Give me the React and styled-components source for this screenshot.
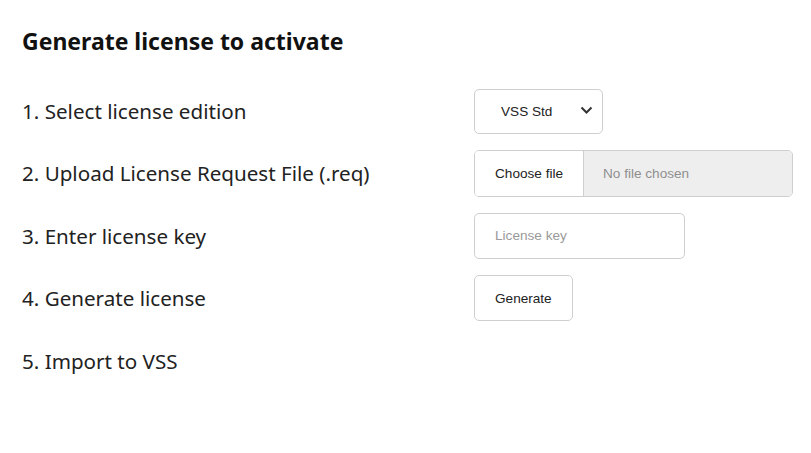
import React from "react";
import styled, { createGlobalStyle } from "styled-components";

const Global = createGlobalStyle`
  html, body { margin: 0; padding: 0; background: #fff; }
  body { font-family: "Noto Sans", "Open Sans", sans-serif; color: #212121; }
`;

const Page = styled.div`
  padding: 26px 22px 0 22px;
`;

const Title = styled.h1`
  margin: 0 0 32px 0;
  font-size: 23px;
  font-weight: 700;
  line-height: 30px;
  color: #111;
`;

const Steps = styled.div`
  display: grid;
  grid-template-columns: 452px auto;
  grid-auto-rows: 46px;
  row-gap: 16.4px;
  align-items: center;
`;

const Label = styled.div`
  font-size: 20.6px;
  line-height: 28px;
  color: #222;
`;

const Cell = styled.div`
  display: flex;
  align-items: center;
  height: 46px;
`;

const Control = styled.div`
  box-sizing: border-box;
  height: ${(p) => p.$h || 46}px;
  width: ${(p) => p.$w}px;
  border: 1px solid #cfcfcf;
  border-radius: 5px;
  background: #fff;
  font-family: "Liberation Sans", Arial, sans-serif;
  font-size: 13.6px;
  color: #222;
  display: flex;
  align-items: center;
  padding-left: 20px;
  position: relative;
`;

const SelectBox = styled(Control)`
  padding-left: 26px;
`;

const Chevron = styled.svg`
  position: absolute;
  right: 9px;
  top: 50%;
  margin-top: -5px;
`;

const FileBox = styled(Control)`
  padding-left: 0;
  overflow: hidden;
`;

const FileButton = styled.div`
  box-sizing: border-box;
  height: 100%;
  width: 109px;
  padding-left: 20px;
  display: flex;
  align-items: center;
  border-right: 1px solid #cfcfcf;
  background: #fff;
`;

const FileName = styled.div`
  flex: 1;
  height: 100%;
  background: #eeeeee;
  color: #8e8e8e;
  display: flex;
  align-items: center;
  padding-left: 19px;
`;

const Placeholder = styled.span`
  color: #9a9a9a;
`;

export default function App() {
  return (
    <>
      <Global />
      <Page>
        <Title>Generate license to activate</Title>
        <Steps>
          <Label>1. Select license edition</Label>
          <Cell>
            <SelectBox $w={129} $h={45}>
              VSS Std
              <Chevron width="13" height="9" viewBox="0 0 13 9">
                <path d="M1.5 1.5 L6.5 6.5 L11.5 1.5" fill="none" stroke="#333" strokeWidth="2" />
              </Chevron>
            </SelectBox>
          </Cell>

          <Label>2. Upload License Request File (.req)</Label>
          <Cell>
            <FileBox $w={319} $h={47}>
              <FileButton>Choose file</FileButton>
              <FileName>No file chosen</FileName>
            </FileBox>
          </Cell>

          <Label>3. Enter license key</Label>
          <Cell>
            <Control $w={211}>
              <Placeholder>License key</Placeholder>
            </Control>
          </Cell>

          <Label>4. Generate license</Label>
          <Cell>
            <Control $w={99}>Generate</Control>
          </Cell>

          <Label>5. Import to VSS</Label>
          <Cell />
        </Steps>
      </Page>
    </>
  );
}
